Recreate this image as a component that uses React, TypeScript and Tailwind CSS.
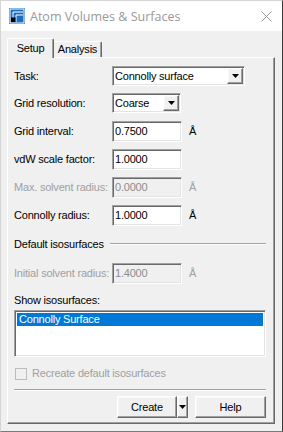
import React from "react";

const sunken =
  "border border-t-[#a0a0a0] border-l-[#a0a0a0] border-b-white border-r-white shadow-[inset_1px_1px_0_#696969,inset_-1px_-1px_0_#e3e3e3]";
const raised =
  "border border-t-white border-l-white border-b-[#696969] border-r-[#696969] shadow-[inset_-1px_-1px_0_#a0a0a0,inset_1px_1px_0_#f7f7f7] bg-[#f0f0f0]";

function Arrow() {
  return (
    <svg width="7" height="4" viewBox="0 0 7 4">
      <path d="M0 0H7L3.5 4Z" fill="#000" />
    </svg>
  );
}

function Select({ value, width }: { value: string; width: string }) {
  return (
    <div className={`${sunken} ${width} h-[20px] bg-white flex items-center`}>
      <span className="flex-1 pl-[2px]">{value}</span>
      <div className={`${raised} w-[16px] h-[16px] flex items-center justify-center mr-[1px]`}>
        <Arrow />
      </div>
    </div>
  );
}

function Field({
  label,
  value,
  unit,
  disabled,
  className = "",
}: {
  label: string;
  value: string;
  unit?: boolean;
  disabled?: boolean;
  className?: string;
}) {
  return (
    <div className={`flex items-center h-[20px] ${className}`}>
      <span className={`w-[98px] shrink-0 whitespace-nowrap ${disabled ? "text-[#a0a0a0]" : "text-black"}`}>{label}</span>
      <div
        className={`${sunken} w-[70px] h-[21px] flex items-center pl-[2px] ${
          disabled ? "bg-[#f0f0f0] text-[#8d8d8d]" : "bg-white text-black"
        }`}
      >
        {value}
      </div>
      {unit && <span className={`ml-[7px] ${disabled ? "text-[#a0a0a0]" : "text-black"}`}>Å</span>}
    </div>
  );
}

export default function App() {
  return (
    <div className="w-[283px] h-[432px] bg-[#f0f0f0] border border-l-[#d4d4d4] border-r-[#3a3a3a] border-b-[#7a7a7a] border-t-[#d4d4d4] flex flex-col text-[11px] leading-[13px] tracking-[-0.2px] font-['Liberation_Sans',Arial,sans-serif] text-black overflow-hidden">
      {/* title bar */}
      <div className="h-[30px] bg-white flex items-center pl-[8px] pr-[10px] shrink-0 tracking-normal">
        <svg width="16" height="16" viewBox="0 0 16 16">
          <rect x="0" y="0" width="16" height="16" fill="#1b6ec2" />
          <rect x="1" y="1" width="14" height="14" fill="none" stroke="#fff" strokeWidth="1" />
          <path d="M4 14V4H14" fill="none" stroke="#fff" strokeWidth="1" />
          <path d="M7 14V7H14" fill="none" stroke="#fff" strokeWidth="1" />
          <rect x="2" y="9.5" width="4.5" height="4.5" fill="#000" />
        </svg>
        <span className="ml-[5px] text-[12.5px] text-[#999999] font-['Open_Sans',sans-serif] flex-1">
          Atom Volumes &amp; Surfaces
        </span>
        <svg width="11" height="11" viewBox="0 0 11 11">
          <path d="M0.5 0.5L10.5 10.5M10.5 0.5L0.5 10.5" stroke="#999" strokeWidth="1" />
        </svg>
      </div>

      {/* tabs */}
      <div className="pl-[6px] pt-[7px] flex items-end h-[26px] shrink-0 relative z-10">
        <div className="w-[47px] h-[20px] border border-t-white border-l-white border-r-[#696969] border-b-0 bg-[#f0f0f0] rounded-t-[2px] flex items-center justify-center pb-[1px] shadow-[inset_-1px_0_0_#a0a0a0] -mb-[1px]">
          Setup
        </div>
        <div className="w-[48px] h-[16px] border border-t-white border-l-0 border-r-[#696969] border-b-0 rounded-tr-[2px] flex items-center justify-center shadow-[inset_-1px_0_0_#a0a0a0]">
          Analysis
        </div>
      </div>

      {/* panel */}
      <div className="ml-[6px] w-[268px] h-[367px] border border-t-white border-l-white border-b-[#696969] border-r-[#696969] shadow-[inset_-1px_-1px_0_#a0a0a0] flex flex-col pl-[6px] pr-[8px]">
        <div className="flex items-center h-[20px] mt-[8px]">
          <span className="w-[98px]">Task:</span>
          <Select value="Connolly surface" width="w-[133px]" />
        </div>
        <div className="flex items-center h-[20px] mt-[7px]">
          <span className="w-[98px]">Grid resolution:</span>
          <Select value="Coarse" width="w-[69px]" />
        </div>
        <Field label="Grid interval:" value="0.7500" unit className="mt-[8px]" />
        <Field label="vdW scale factor:" value="1.0000" className="mt-[8px]" />
        <Field label="Max. solvent radius:" value="0.0000" unit disabled className="mt-[8px]" />
        <Field label="Connolly radius:" value="1.0000" unit className="mt-[8px]" />

        <div className="flex items-center h-[14px] mt-[12px]">
          <span>Default isosurfaces</span>
          <div className="flex-1 ml-[6px] h-[2px] border-t border-t-[#a0a0a0] border-b border-b-white" />
        </div>
        <Field label="Initial solvent radius:" value="1.4000" unit disabled className="mt-[12px]" />

        <div className="h-[14px] flex items-center mt-[10px]">Show isosurfaces:</div>
        <div className={`${sunken} mt-[3px] h-[47px] bg-white p-[2px]`}>
          <div className="h-[13px] bg-[#0078d7] text-white pl-[2px] flex items-center">Connolly Surface</div>
        </div>

        <div className="flex items-center h-[13px] mt-[10px] text-[#a0a0a0]">
          <div className="w-[12px] h-[12px] border border-[#bcbcbc] bg-[#f0f0f0] ml-[1px]" />
          <span className="ml-[5px]">Recreate default isosurfaces</span>
        </div>

        <div className="mt-[9px] h-[2px] border-t border-t-[#a0a0a0] border-b border-b-white" />

        <div className="flex justify-end mt-[5px] h-[22px]">
          <div className={`${raised} w-[60px] h-[22px] flex items-center justify-center`}>Create</div>
          <div className={`${raised} w-[11px] h-[22px] flex items-center justify-center`}>
            <Arrow />
          </div>
          <div className={`${raised} w-[71px] h-[22px] flex items-center justify-center ml-[7px]`}>Help</div>
        </div>
      </div>
    </div>
  );
}
